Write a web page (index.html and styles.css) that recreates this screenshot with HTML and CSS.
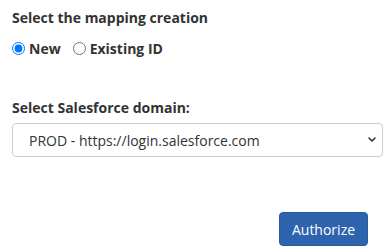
FILE: index.html
```html
<!DOCTYPE html>
<html lang="en">
<head>
  <meta charset="UTF-8" />
  <title>Authorize</title>
  <link rel="stylesheet" href="styles.css">
</head>
<body>
  <div class="panel">
    <h4 class="label">Select the mapping creation</h4>
    <div class="radios">
      <label class="radio"><input type="radio" name="mode" checked> New</label>
      <label class="radio"><input type="radio" name="mode"> Existing ID</label>
    </div>

    <h4 class="label domain-label">Select Salesforce domain:</h4>
    <div class="select-wrap">
      <select class="domain">
        <option>PROD - https://login.salesforce.com</option>
        <option>SANDBOX - https://test.salesforce.com</option>
      </select>
      <svg class="chevron" width="8" height="5" viewBox="0 0 8 5">
        <path d="M1 1l3 3 3-3" fill="none" stroke="#333" stroke-width="1.6" stroke-linecap="round" stroke-linejoin="round"/>
      </svg>
    </div>

    <div class="actions">
      <button class="btn-primary">Authorize</button>
    </div>
  </div>
</body>
</html>
```

FILE: styles.css
```css
* {
  margin: 0;
  padding: 0;
  box-sizing: border-box;
}

body {
  font-family: 'Open Sans', 'Noto Sans', sans-serif;
  color: #333;
  background: #fff;
  padding: 8px 6px 0 12px;
}

.label {
  font-size: 14px;
  font-weight: 700;
  line-height: 19px;
}

.radios {
  display: flex;
  gap: 12px;
  margin-top: 12px;
}

.radio {
  display: flex;
  align-items: center;
  font-size: 14px;
  font-weight: 700;
  gap: 4px;
}

.radio input {
  width: 13px;
  height: 13px;
  margin: 0;
}

.domain-label {
  margin-top: 40px;
}

.select-wrap {
  position: relative;
  margin-top: 6px;
}

.domain {
  appearance: none;
  display: block;
  width: 100%;
  height: 34px;
  padding: 0 16px;
  font-family: inherit;
  font-size: 14px;
  color: #333;
  background: #fff;
  border: 1px solid #ccc;
  border-radius: 4px;
}

.chevron {
  position: absolute;
  right: 7px;
  top: 14px;
  pointer-events: none;
}

.actions {
  display: flex;
  justify-content: flex-end;
  margin-top: 55px;
  padding-right: 15px;
}

.btn-primary {
  width: 89px;
  height: 34px;
  font-family: inherit;
  font-size: 14px;
  color: #fff;
  background: #2d64ad;
  border: 1px solid #285a9c;
  border-radius: 4px;
}
```
